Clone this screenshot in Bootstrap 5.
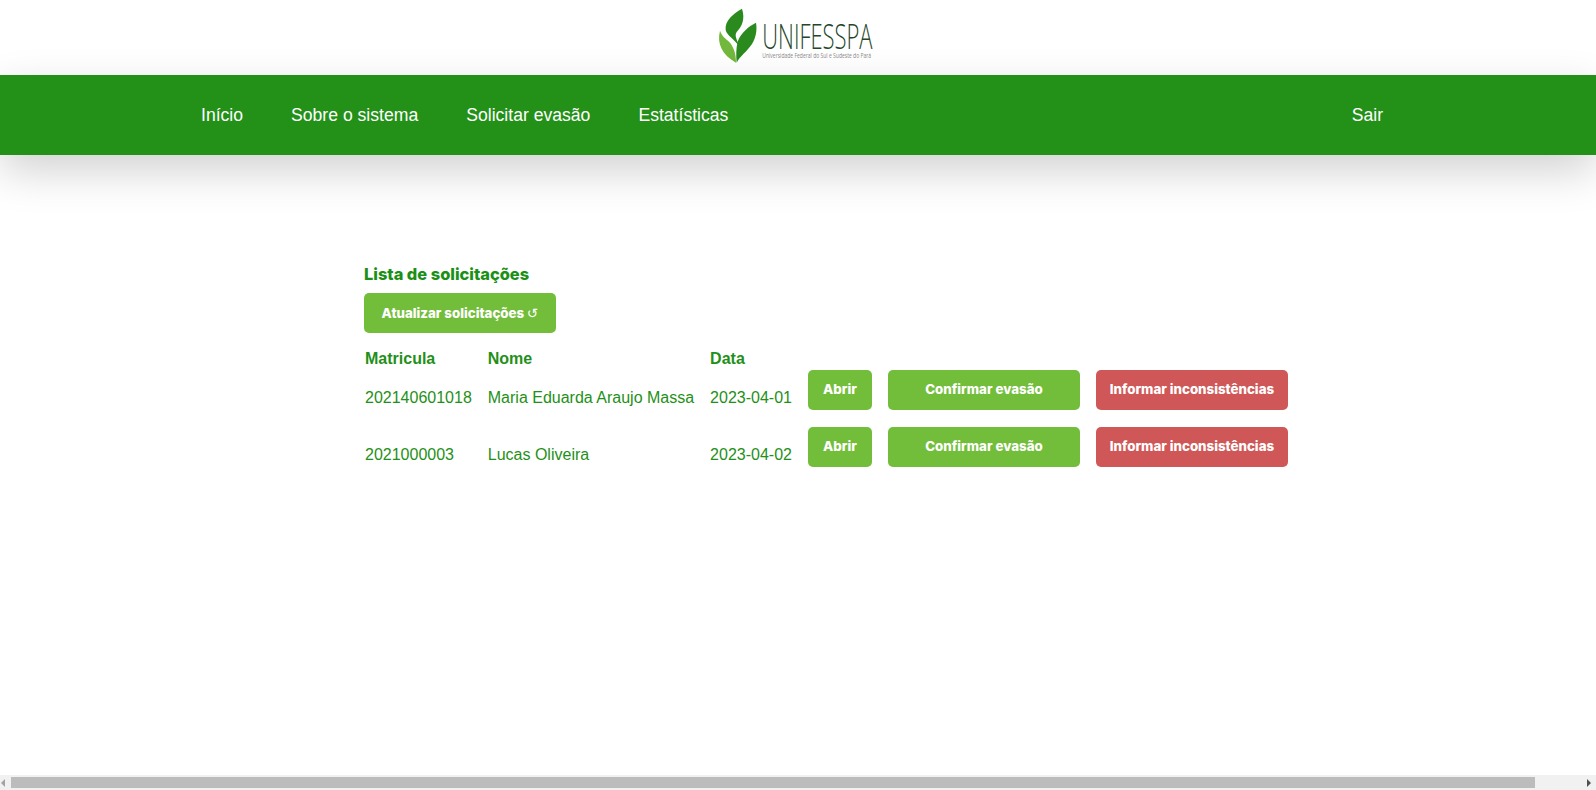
<!DOCTYPE html>
<html lang="pt-BR">
<head>
  <meta charset="UTF-8">
  <title>Lista de solicitações</title>
  <link href="https://cdn.jsdelivr.net/npm/bootstrap@5.3.0/dist/css/bootstrap.min.css" rel="stylesheet">
  <style>
    html, body { height: 790px; overflow: hidden; }
    body { font-family: "Liberation Sans", Arial, sans-serif; background: #fff; }
    .brand-bar { height: 75px; }
    .main-nav { height: 80px; background: #239018; box-shadow: 0 16px 44px rgba(0, 0, 0, .18); padding: 0 189px 0 177px; }
    .main-nav.navbar-expand .navbar-nav .nav-link { color: #fff; font-size: 17.6px; padding: 0 24px; }
    .page-body { padding: 106px 0 0 364px; }
    .list-title { font-family: Inter, sans-serif; font-size: 16.4px; font-weight: 800; color: #1b9016; line-height: 26px; margin: 0 0 6px; }
    .act-btn { font-family: Inter, sans-serif; font-size: 13.3px; font-weight: 800; color: #fff; border: 0; border-radius: 5px; height: 39.5px; padding: 0; display: block; }
    .act-btn:hover { color: #fff; }
    .act-green { background: #72bd3a; }
    .act-green:hover { background: #72bd3a; }
    .act-red { background: #d05757; }
    .act-red:hover { background: #d05757; }
    .refresh-btn { width: 192px; height: 40px; }
    .refresh-glyph { font-weight: 400; font-family: "DejaVu Sans", sans-serif; font-size: 13.5px; }
    .wide-btn { width: 192px; }
    .open-btn { width: 64px; }
    .req-table { color: #1f9018; margin-top: 8px; }
    .req-table th { font-weight: 700; padding: 8px 15px 2px 1px; line-height: 19px; }
    .req-table td { padding: 0 15px 2px 1px; height: 57px; vertical-align: middle; }
    .req-table td.date-cell { padding-right: 16px; }
    .req-table td.btn-cell { padding: 0 16px 17.5px 0; vertical-align: top; }
    .req-table td.btn-cell:last-child { padding-right: 0; }
    .fake-scroll { height: 15px; background: #f1f1f1; padding: 2px 0; }
    .scroll-thumb { width: 1524px; height: 11px; background: #bcbcbc; margin-left: 6px; }
    .arrow-left { width: 0; height: 0; margin-left: 1px; border: 4px solid transparent; border-left: 0; border-right: 4px solid #a3a3a3; }
    .arrow-right { width: 0; height: 0; margin-right: 5px; border: 4px solid transparent; border-right: 0; border-left: 4px solid #505050; }
  </style>
</head>
<body class="d-flex flex-column">

  <!-- Logo -->
  <div class="brand-bar d-flex justify-content-center">
    <svg width="190" height="75" viewBox="9 0 570 225" role="img" aria-label="Unifesspa">
      <path fill="#2a8a1e" d="M126 26C98 42 74 62 77 90C80 106 104 118 118 140C112 120 102 108 110 96C126 78 136 58 126 26Z"/>
      <path fill="#2a8a1e" d="M168 68C148 78 122 98 113 125C108 145 108 165 110 188C120 168 140 156 156 132C168 112 172 90 168 68Z"/>
      <path fill="#72b83c" d="M60 92C50 130 66 164 108 188C108 166 104 146 90 128C78 116 66 110 60 92Z"/>
      <text transform="translate(187 148) scale(.633 1)" font-family="Open Sans, sans-serif" font-weight="300" font-size="104" fill="#24462a">UNIFESSPA</text>
      <text transform="translate(187 174) scale(.755 1)" font-family="Open Sans, sans-serif" font-size="20" fill="#8a8a8a">Universidade Federal do Sul e Sudeste do Pará</text>
    </svg>
  </div>

  <!-- Navbar -->
  <nav class="main-nav navbar navbar-expand position-relative">
    <ul class="navbar-nav me-auto">
      <li class="nav-item"><a class="nav-link" href="#">Início</a></li>
      <li class="nav-item"><a class="nav-link" href="#">Sobre o sistema</a></li>
      <li class="nav-item"><a class="nav-link" href="#">Solicitar evasão</a></li>
      <li class="nav-item"><a class="nav-link" href="#">Estatísticas</a></li>
    </ul>
    <ul class="navbar-nav">
      <li class="nav-item"><a class="nav-link" href="#">Sair</a></li>
    </ul>
  </nav>

  <!-- Main Content -->
  <div class="page-body flex-grow-1">
    <h2 class="list-title">Lista de solicitações</h2>
    <button class="btn act-btn act-green refresh-btn" type="button">Atualizar solicitações <span class="refresh-glyph">↺</span></button>
    <table class="req-table">
      <thead>
        <tr>
          <th>Matricula</th>
          <th>Nome</th>
          <th>Data</th>
        </tr>
      </thead>
      <tbody>
        <tr>
          <td>202140601018</td>
          <td>Maria Eduarda Araujo Massa</td>
          <td class="date-cell">2023-04-01</td>
          <td class="btn-cell"><button class="btn act-btn act-green open-btn" type="button">Abrir</button></td>
          <td class="btn-cell"><button class="btn act-btn act-green wide-btn" type="button">Confirmar evasão</button></td>
          <td class="btn-cell"><button class="btn act-btn act-red wide-btn" type="button">Informar inconsistências</button></td>
        </tr>
        <tr>
          <td>2021000003</td>
          <td>Lucas Oliveira</td>
          <td class="date-cell">2023-04-02</td>
          <td class="btn-cell"><button class="btn act-btn act-green open-btn" type="button">Abrir</button></td>
          <td class="btn-cell"><button class="btn act-btn act-green wide-btn" type="button">Confirmar evasão</button></td>
          <td class="btn-cell"><button class="btn act-btn act-red wide-btn" type="button">Informar inconsistências</button></td>
        </tr>
      </tbody>
    </table>
  </div>

  <!-- Horizontal scrollbar of the captured window -->
  <div class="fake-scroll d-flex align-items-center">
    <div class="arrow-left"></div>
    <div class="scroll-thumb"></div>
    <div class="arrow-right ms-auto"></div>
  </div>

  <script src="https://cdn.jsdelivr.net/npm/bootstrap@5.3.0/dist/js/bootstrap.bundle.min.js"></script>
</body>
</html>
